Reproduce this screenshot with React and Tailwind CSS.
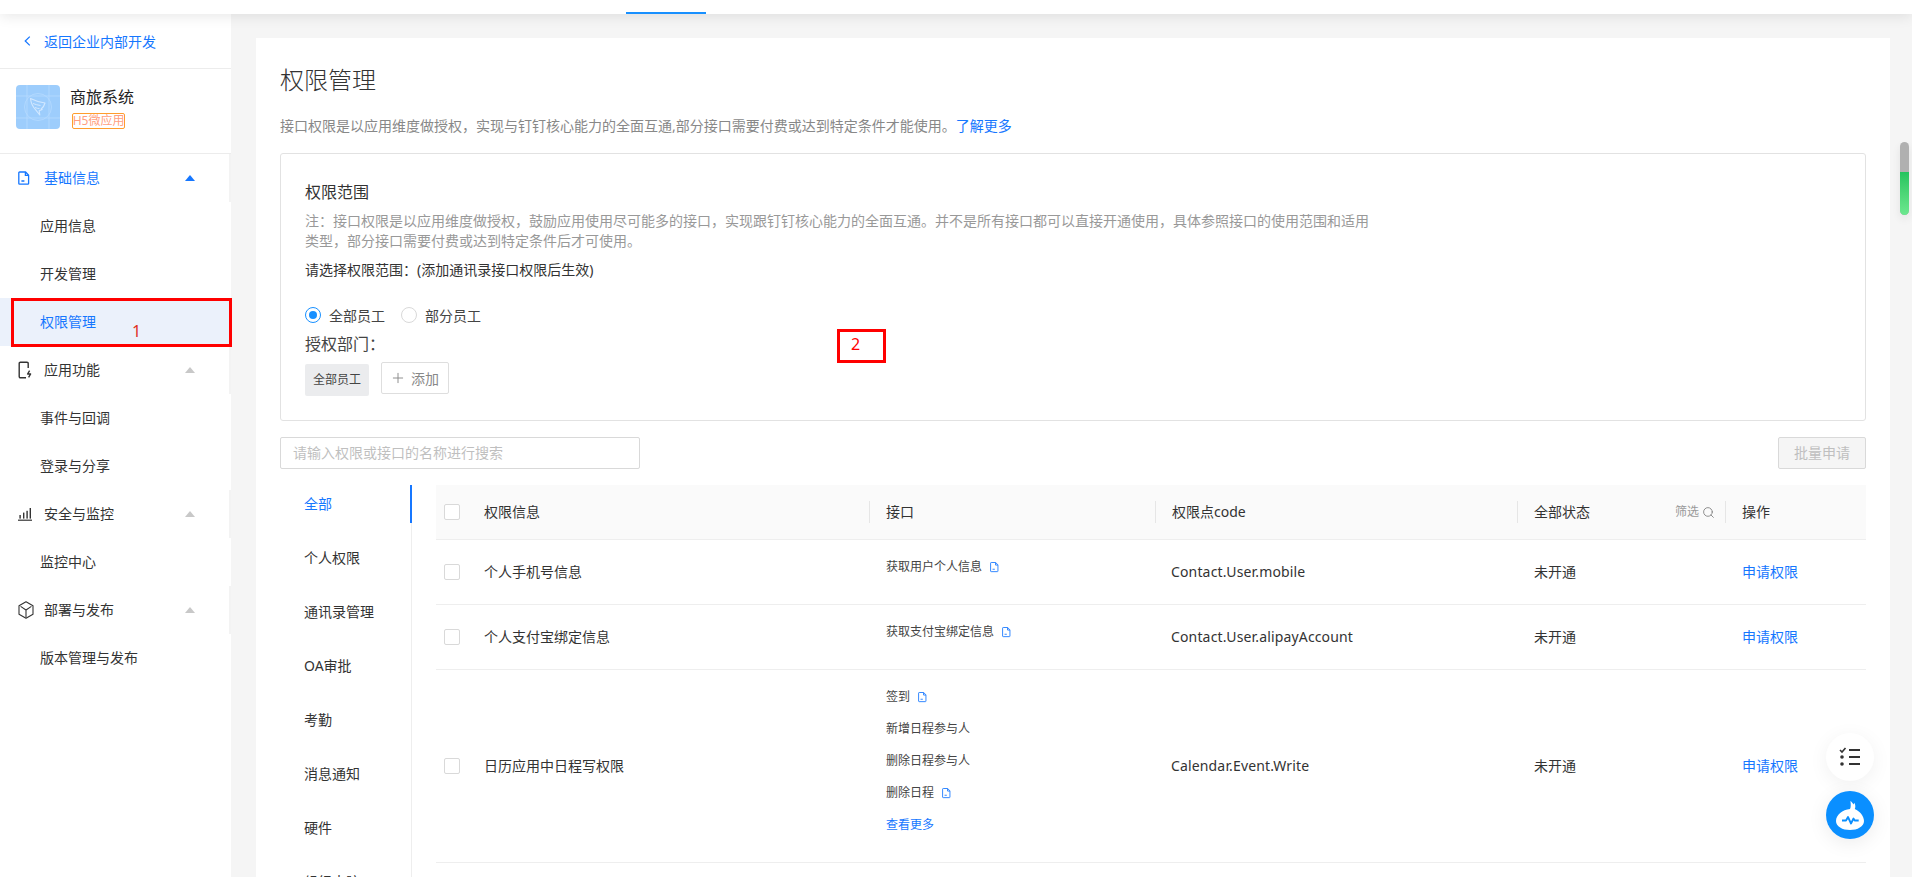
import { Search, Plus } from 'lucide-react';

const menu = [
  { label: '基础信息', icon: 'doc', active: true, children: [{ label: '应用信息' }, { label: '开发管理' }, { label: '权限管理', selected: true }] },
  { label: '应用功能', icon: 'phone', children: [{ label: '事件与回调' }, { label: '登录与分享' }] },
  { label: '安全与监控', icon: 'bars', children: [{ label: '监控中心' }] },
  { label: '部署与发布', icon: 'cube', children: [{ label: '版本管理与发布' }] },
];

const tabs = ['全部', '个人权限', '通讯录管理', 'OA审批', '考勤', '消息通知', '硬件', '组织大脑'];

const rows = [
  { name: '个人手机号信息', apis: [{ text: '获取用户个人信息', doc: true }], code: 'Contact.User.mobile', height: 'h-[65px]' },
  { name: '个人支付宝绑定信息', apis: [{ text: '获取支付宝绑定信息', doc: true }], code: 'Contact.User.alipayAccount', height: 'h-[65px]' },
  {
    name: '日历应用中日程写权限',
    apis: [{ text: '签到', doc: true }, { text: '新增日程参与人' }, { text: '删除日程参与人' }, { text: '删除日程', doc: true }],
    more: true,
    code: 'Calendar.Event.Write',
    height: 'h-[193px]',
  },
];

const gridCols = 'grid grid-cols-[433px_286px_362px_208px_141px]';

function DocIcon({ className }) {
  return (
    <svg viewBox="0 0 12 14" fill="none" stroke="currentColor" strokeWidth="1.3" className={className}>
      <path d="M1.6 1h6l3 3.2v8.2a.8.8 0 0 1-.8.8H1.6a.8.8 0 0 1-.8-.8V1.800a.8.8 0 0 1 .8-.8z" strokeLinejoin="round" />
      <path d="M7.4 1v3.4h3.2M3.4 10h3" />
    </svg>
  );
}

function MenuIcon({ name }) {
  if (name === 'doc') return <DocIcon className="w-[12px] h-[14px] text-[#1677ff]" />;
  if (name === 'phone') {
    return (
      <svg viewBox="0 0 14 18" fill="none" stroke="#333" strokeWidth="1.4" className="w-[14px] h-[18px]">
        <path d="M8 16.800H2.400a1.200 1.200 0 0 1-1.200-1.200V2.400a1.200 1.200 0 0 1 1.200-1.200h6.600a1.200 1.200 0 0 1 1.200 1.200V7" />
        <path d="M11.600 9.600 9.600 13h3l-2 3.400" strokeLinejoin="round" />
      </svg>
    );
  }
  if (name === 'bars') {
    return (
      <svg viewBox="0 0 14 13" fill="#333" className="w-[14px] h-[13px]">
        <rect x="0" y="11.600" width="14" height="1.200" />
        <rect x="1.400" y="7" width="1.400" height="3.600" />
        <rect x="5" y="4.600" width="1.400" height="6" />
        <rect x="8.400" y="2.800" width="1.400" height="7.800" />
        <rect x="11.600" y="0" width="1.400" height="10.600" />
      </svg>
    );
  }
  return (
    <svg viewBox="0 0 16 18" fill="none" stroke="#333" strokeWidth="1.1" className="w-[16px] h-[18px]">
      <path d="M8 .8 15 4.800v8.400l-7 4-7-4V4.800z" strokeLinejoin="round" />
      <path d="M2.600 5.400 8 9l5.400-3.600M8 9v7.600" />
    </svg>
  );
}

function Caret({ active }) {
  return <div className={`w-0 h-0 border-x-[5px] border-x-transparent border-b-[6px] ${active ? 'border-b-[#1677ff]' : 'border-b-[#c8c8c8]'}`} />;
}

function Sidebar() {
  return (
    <aside className="w-[231px] shrink-0 bg-white">
      <div className="h-[55px] flex items-center pl-[24px] text-[#1677ff] border-b border-[#ececec]">
        <svg viewBox="0 0 8 12" fill="none" stroke="currentColor" strokeWidth="1.4" className="w-[7px] h-[12px] mr-[13px]">
          <path d="M6.600 1 1.400 6l5.200 5" />
        </svg>
        返回企业内部开发
      </div>

      <div className="h-[85px] flex items-start pl-[16px] pt-[16px] border-b border-[#ececec]">
        <div className="w-[44px] h-[44px] rounded bg-[#9dcdfc]">
          <svg viewBox="0 0 44 44" fill="none" className="w-[44px] h-[44px]">
            <path d="M0 11h44M0 33h44M11 0v44M33 0v44" stroke="#b6daff" strokeWidth="0.8" />
            <circle cx="22" cy="22" r="13.500" stroke="#b6daff" strokeWidth="0.8" />
            <path d="M14.500 13.500c5 2.500 10 4 14.500 4.500-.6 2.500-2 4.500-3.800 6l1 .6-3 1.200.6 4.200-4.300-5.400c-2.500-2.600-4.500-6.600-5-11.100z" stroke="#d2e8ff" strokeWidth="1.100" strokeLinejoin="round" />
            <path d="M17 18.500c2.500 1 5 1.700 7.500 2M19 22.500c1.500.7 3 1 4.500 1.100" stroke="#d2e8ff" strokeWidth="1" />
          </svg>
        </div>
        <div className="ml-[10px]">
          <div className="text-[16px] leading-[24px] text-[#222]">商旅系统</div>
          <div className="mt-[4px] ml-[2px] w-[53px] h-[16px] flex items-center justify-center border border-[#ff9d2e] rounded-[2px] text-[12px] leading-[14px] text-[#ff9f7f] whitespace-nowrap">H5微应用</div>
        </div>
      </div>

      {menu.map((group) => (
        <div key={group.label}>
          <div className={`h-[48px] flex items-center border-r-2 border-[#f3f3f3] ${group.active ? 'text-[#1677ff]' : 'text-[#333]'}`}>
            <div className="w-[44px] pl-[18px] flex justify-start">
              <MenuIcon name={group.icon} />
            </div>
            <span className="flex-1 pb-[2px]">{group.label}</span>
            <div className="mr-[34px]">
              <Caret active={group.active} />
            </div>
          </div>
          {group.children.map((item) => (
            <div
              key={item.label}
              className={`h-[48px] flex items-center pl-[40px] pb-[2px] ${item.selected ? 'bg-[#ebf1fb] text-[#1677ff]' : 'text-[#333]'}`}
            >
              {item.label}
            </div>
          ))}
        </div>
      ))}
    </aside>
  );
}

function ScopeBox() {
  return (
    <section className="mt-[17px] h-[268px] border border-[#e2e2e2] rounded-[3px] pl-[24px] pt-[26px]">
      <h2 className="text-[16px] leading-[24px] text-[#333]">权限范围</h2>
      <p className="mt-[7px] w-[1072px] text-[#999] leading-[20px]">
        注：接口权限是以应用维度做授权，鼓励应用使用尽可能多的接口，实现跟钉钉核心能力的全面互通。并不是所有接口都可以直接开通使用，具体参照接口的使用范围和适用类型，部分接口需要付费或达到特定条件后才可使用。
      </p>
      <p className="mt-[9px] leading-[20px] text-[#333]">请选择权限范围：(添加通讯录接口权限后生效)</p>

      <div className="mt-[24px] flex items-center h-[22px] text-[#444]">
        <span className="w-[16px] h-[16px] rounded-full border border-[#1890ff] flex items-center justify-center">
          <span className="w-[8px] h-[8px] rounded-full bg-[#1890ff]" />
        </span>
        <span className="ml-[8px]">全部员工</span>
        <span className="ml-[16px] w-[16px] h-[16px] rounded-full border border-[#d9d9d9]" />
        <span className="ml-[8px]">部分员工</span>
      </div>

      <div className="mt-[6px] text-[16px] leading-[24px] text-[#444]">授权部门：</div>

      <div className="mt-[6px] flex items-start">
        <div className="mt-[2px] w-[64px] h-[32px] flex items-center justify-center rounded-[2px] bg-[#ebecee] text-[12px] text-[#444]">全部员工</div>
        <button className="ml-[12px] w-[68px] h-[32px] flex items-center pl-[8px] rounded-[2px] border border-[#dedede] text-[#888]">
          <Plus size={16} strokeWidth={1.4} />
          <span className="ml-[5px] text-[14px]">添加</span>
        </button>
      </div>
    </section>
  );
}

function HeaderCell({ label, children }) {
  return (
    <div className="flex items-center h-full">
      <div className="w-px h-[22px] bg-[#e6e6e6]" />
      <span className="ml-[16px] pb-[2px] text-[#333]">{label}</span>
      {children}
    </div>
  );
}

function PermissionTable() {
  return (
    <div className="ml-[24px] flex-1">
      <div className={`${gridCols} h-[55px] bg-[#fafafa] border-b border-[#eeeeee]`}>
        <div className="flex items-center pl-[8px]">
          <span className="w-[16px] h-[16px] rounded-[2px] border border-[#d9d9d9] bg-white" />
          <span className="ml-[24px] pb-[2px] text-[#333]">权限信息</span>
        </div>
        <HeaderCell label="接口" />
        <HeaderCell label="权限点code" />
        <HeaderCell label="全部状态">
          <span className="ml-auto text-[12px] text-[#999]">筛选</span>
          <Search size={13} strokeWidth={1.5} className="ml-[3px] mr-[10px] text-[#777]" />
        </HeaderCell>
        <HeaderCell label="操作" />
      </div>

      {rows.map((row) => (
        <div key={row.code} className={`${gridCols} ${row.height} border-b border-[#eeeeee] text-[#333]`}>
          <div className="flex items-center pl-[8px]">
            <span className="w-[16px] h-[16px] rounded-[2px] border border-[#d9d9d9]" />
            <span className="ml-[24px] pb-[2px]">{row.name}</span>
          </div>
          <div className="flex flex-col justify-center pl-[17px] pb-[10px] text-[12px] text-[#444]">
            {row.apis.map((api) => (
              <div key={api.text} className="h-[32px] flex items-center">
                {api.text}
                {api.doc && <DocIcon className="ml-[8px] w-[9px] h-[12px] text-[#2f86ff]" />}
              </div>
            ))}
            {row.more && <div className="h-[32px] flex items-center text-[#1677ff]">查看更多</div>}
          </div>
          <div className="flex items-center pl-[16px] pb-[2px] tracking-[0.15px]">{row.code}</div>
          <div className="flex items-center pl-[17px] pb-[2px]">未开通</div>
          <div className="flex items-center pl-[17px] pb-[2px] text-[#1677ff]">申请权限</div>
        </div>
      ))}
    </div>
  );
}

export default function App() {
  return (
    <div
      className="relative w-[1912px] h-[877px] overflow-hidden bg-[#f5f5f5] text-[14px]"
      style={{ fontFamily: '"Noto Sans", "Noto Sans CJK SC", sans-serif' }}
    >
      <header className="relative z-10 h-[14px] bg-white pl-[626px] flex items-end shadow-[0_2px_14px_rgba(0,0,0,0.1)]">
        <div className="w-[80px] h-[2px] bg-[#1890ff]" />
      </header>

      <div className="flex h-[863px]">
        <Sidebar />

        <main className="flex-1 pl-[25px] pr-[22px] pt-[24px] overflow-hidden">
          <div className="h-[900px] bg-white px-[24px] pt-[26px]">
            <h1 className="text-[24px] leading-[32px] font-light text-[#333]">权限管理</h1>
            <p className="mt-[20px] leading-[20px] text-[#888]">
              接口权限是以应用维度做授权，实现与钉钉核心能力的全面互通,部分接口需要付费或达到特定条件才能使用。
              <span className="text-[#1677ff]">了解更多</span>
            </p>

            <ScopeBox />

            <div className="mt-[16px] flex justify-between">
              <div className="w-[360px] h-[32px] flex items-center pl-[12px] pb-[2px] border border-[#d9d9d9] rounded-[2px] text-[#bfbfbf]">
                请输入权限或接口的名称进行搜索
              </div>
              <button className="w-[88px] h-[32px] pb-[2px] border border-[#d9d9d9] rounded-[2px] bg-[#f5f5f5] text-[#bfbfbf]">批量申请</button>
            </div>

            <div className="mt-[16px] flex">
              <nav className="w-[132px] shrink-0 border-r border-[#eeeeee]">
                {tabs.map((tab, i) => (
                  <div
                    key={tab}
                    className={`h-[38px] mb-[16px] flex items-center pl-[24px] pb-[2px] -mr-px ${i === 0 ? 'text-[#1677ff] border-r-2 border-[#1677ff]' : 'text-[#333]'}`}
                  >
                    {tab}
                  </div>
                ))}
              </nav>
              <PermissionTable />
            </div>
          </div>
        </main>
      </div>

      {/* annotations drawn on top of the screenshot */}
      <div className="absolute left-[11px] top-[298px] w-[221px] h-[49px] border-[3px] border-[#ff0000]" />
      <span className="absolute left-[132px] top-[320px] text-[16px] leading-[22px] text-[#e0301e]">1</span>
      <div className="absolute left-[837px] top-[329px] w-[49px] h-[34px] border-[3px] border-[#ff0000]" />
      <span className="absolute left-[851px] top-[333px] text-[16px] leading-[22px] text-[#ff0000]">2</span>

      {/* scroll widget */}
      <div className="absolute left-[1900px] top-[142px] w-[9px] h-[73px] rounded-full overflow-hidden bg-[#b0b0b0] shadow-[0_4px_8px_rgba(0,0,0,0.08)] flex flex-col justify-end">
        <div className="h-[43px] bg-gradient-to-b from-[#22c45e] to-[#6ce88f]" />
      </div>

      {/* floating buttons */}
      <button className="absolute left-[1826px] top-[733px] w-[48px] h-[48px] rounded-full bg-white flex items-center justify-center shadow-[0_4px_20px_rgba(0,0,0,0.06)]">
        <svg viewBox="0 0 22 20" className="w-[22px] h-[20px]" fill="none" stroke="#333">
          <path d="M1 3l2 2 3.500-4" strokeWidth="1.600" />
          <path d="M10 3h11M10 10h11M10 17h11" strokeWidth="1.800" />
          <circle cx="3" cy="10" r="1.800" fill="#333" stroke="none" />
          <circle cx="3" cy="17" r="1.800" fill="#333" stroke="none" />
        </svg>
      </button>
      <button className="absolute left-[1826px] top-[791px] w-[48px] h-[48px] rounded-full bg-[#0a8fff] flex items-center justify-center shadow-[0_4px_20px_rgba(0,0,0,0.08)]">
        <svg viewBox="0 0 30 32" className="w-[30px] h-[32px]">
          <path d="M15 10c.8-1.500 1-4 .4-8 1.500 1.200 2.400 2.200 3 3.400.5-.6.800-1.200.9-1.700 1.200 2 1.400 4.300.5 6.300C25 12.600 29 17 29 22c0 5.600-6.500 9-14 9S1 27.600 1 22c0-6 6.500-11.600 14-12z" fill="#fff" />
          <path d="M7 21.500h4l2-3.500 3 6.500 2.500-5 1.200 2h4" fill="none" stroke="#0a8fff" strokeWidth="1.800" strokeLinejoin="round" />
        </svg>
      </button>
    </div>
  );
}
